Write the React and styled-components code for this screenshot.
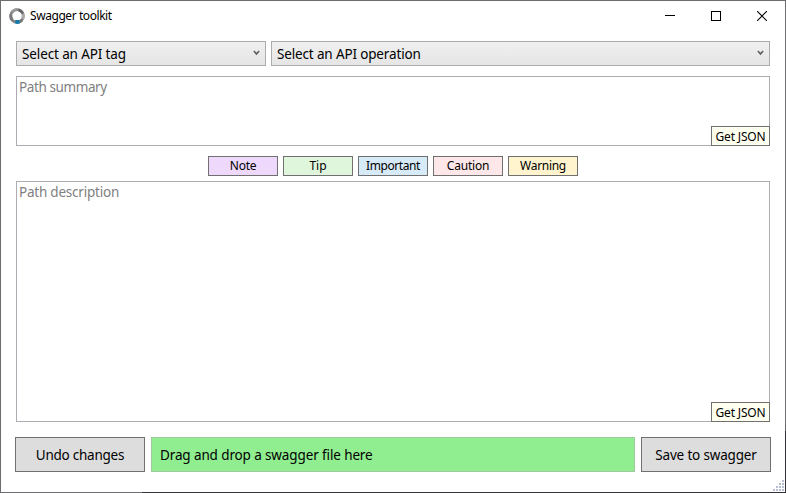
import React from "react";
import styled, { createGlobalStyle } from "styled-components";

const GlobalStyle = createGlobalStyle`
  *, *::before, *::after { box-sizing: border-box; }
  body { margin: 0; background: #fff; }
  button { border-radius: 0; margin: 0; padding: 0; }
`;

const Window = styled.main`
  position: relative;
  width: 786px;
  height: 493px;
  display: flex;
  flex-direction: column;
  border: 1px solid #6d6d6f;
  background: #fff;
  color: #000;
  font-family: "Noto Sans", "Open Sans", sans-serif;
`;

const BottomEdge = styled.div`
  position: absolute;
  left: 141px;
  right: -1px;
  bottom: -1px;
  height: 1px;
  background: #333338;
`;

const RightEdge = styled.div`
  position: absolute;
  right: -1px;
  bottom: -1px;
  width: 1px;
  height: 62px;
  background: #333338;
`;

const Text = styled.span`
  display: block;
  white-space: pre;
  font-size: ${(p) => p.$size}px;
  line-height: 18px;
  letter-spacing: ${(p) => p.$spacing || 0}px;
`;

const TitleBar = styled.header`
  height: 30px;
  display: flex;
  align-items: center;
  padding-left: 8px;
`;

const Title = styled(Text)`
  flex: 1;
  margin-left: 5px;
`;

const CaptionButton = styled.button`
  width: 46px;
  height: 29px;
  display: grid;
  place-items: center;
  border: 0;
  background: transparent;
`;

const CaptionButtons = styled.div`
  display: flex;
  height: 30px;
  align-items: flex-start;
`;

const Content = styled.div`
  display: flex;
  flex-direction: column;
  padding: 10px 15px 0;
`;

const SelectRow = styled.div`
  display: flex;
  gap: 5px;
`;

const Select = styled.button`
  width: ${(p) => p.$width}px;
  height: 25px;
  display: flex;
  align-items: center;
  justify-content: space-between;
  padding: 1px 5px 0;
  border: 1px solid #acacac;
  background: linear-gradient(#f0f0f0, #e5e5e5);
  color: #000;
  font-family: inherit;
  text-align: left;
`;

const Chevron = styled.svg`
  margin-top: -2px;
`;

const Editor = styled.section`
  position: relative;
  height: ${(p) => p.$height}px;
  margin-top: ${(p) => p.$top}px;
  padding: 1px 2px;
  border: 1px solid #abadb3;
  color: #808080;
`;

const JsonButton = styled.button`
  position: absolute;
  right: -1px;
  bottom: -1px;
  width: 59px;
  height: 20px;
  display: grid;
  place-items: center;
  padding-top: 1px;
  border: 1px solid #707070;
  background: #fffff0;
  font-family: inherit;
  color: #000;
`;

const TagRow = styled.div`
  display: flex;
  justify-content: center;
  gap: 5px;
  margin-top: 10px;
`;

const Tag = styled.button`
  width: 70px;
  height: 20px;
  display: grid;
  place-items: center;
  border: 1px solid #707070;
  background: ${(p) => p.$color};
  color: #000;
  font-family: inherit;
`;

const Footer = styled.footer`
  display: flex;
  gap: 6px;
  margin: 15px -1px 0;
`;

const ActionButton = styled.button`
  width: 130px;
  height: 35px;
  display: grid;
  place-items: center;
  padding-top: 1px;
  border: 1px solid #707070;
  background: #ddd;
  color: #000;
  font-family: inherit;
`;

const DropZone = styled.div`
  flex: 1;
  height: 35px;
  display: flex;
  align-items: center;
  padding: 1px 8px 0;
  border: 1px solid #9fcaa0;
  background: #90ee90;
`;

const Grip = styled.svg`
  position: absolute;
  right: 1px;
  bottom: 1px;
`;

const tags = [
  { label: "Note", color: "#eed9fc", spacing: -0.3 },
  { label: "Tip", color: "#dff6dd", spacing: 0 },
  { label: "Important", color: "#d7eaf8", spacing: -0.42 },
  { label: "Caution", color: "#fde7e9", spacing: -0.2 },
  { label: "Warning", color: "#fff4ce", spacing: -0.3 },
];

const gripDots = [[9, 0], [6, 3], [9, 3], [3, 6], [6, 6], [9, 6], [0, 9], [3, 9], [6, 9], [9, 9]];

function AppLogo() {
  return (
    <svg width="16" height="16" viewBox="0 0 16 16" fill="none" strokeWidth="2.8">
      <circle cx="8" cy="8" r="6.3" stroke="#858585" />
      <path d="M3.2 4A6.3 6.3 0 0 1 8 1.7" stroke="#999" />
      <path d="M9.5 1.9A6.3 6.3 0 0 1 13.7 5.2" stroke="#666" />
      <path d="M13.9 6A6.3 6.3 0 0 1 13.7 10.8" stroke="#aaa" />
      <path d="M1.9 6.7A6.3 6.3 0 0 0 3.4 12.2" stroke="#777" />
      <path d="M13 12A6.3 6.3 0 0 1 10.6 13.7" stroke="#777" />
      <path d="M6.3 12H10.4L10.8 15.4Q8 16.4 6.2 15.3Z" fill="#137cab" />
    </svg>
  );
}

function Dropdown({ width, label, spacing }) {
  return (
    <Select $width={width}>
      <Text $size={13.5} $spacing={spacing}>{label}</Text>
      <Chevron width="7" height="6" viewBox="0 0 7 6" fill="none" stroke="#606060" strokeWidth="1.7">
        <path d="M.9 1L3.5 4L6.1 1" />
      </Chevron>
    </Select>
  );
}

function TextEditor({ height, top, placeholder, spacing }) {
  return (
    <Editor $height={height} $top={top}>
      <Text $size={13.5} $spacing={spacing}>{placeholder}</Text>
      <JsonButton><Text $size={12} $spacing={-0.15}>Get JSON</Text></JsonButton>
    </Editor>
  );
}

export default function App() {
  return (
    <>
      <GlobalStyle />
      <Window>
        <TitleBar>
          <AppLogo />
          <Title $size={12} $spacing={-0.43}>Swagger toolkit</Title>
          <CaptionButtons>
            <CaptionButton aria-label="Minimize">
              <svg width="10" height="11" viewBox="0 0 10 11" shapeRendering="crispEdges"><path d="M0 5.5H10" stroke="#000" /></svg>
            </CaptionButton>
            <CaptionButton aria-label="Maximize">
              <svg width="10" height="10" viewBox="0 0 10 10" shapeRendering="crispEdges"><path d="M.5.5h9v9h-9Z" fill="none" stroke="#000" /></svg>
            </CaptionButton>
            <CaptionButton aria-label="Close">
              <svg width="10" height="10" viewBox="0 0 10 10"><path d="M0 0L10 10M10 0L0 10" stroke="#000" strokeWidth="1.1" /></svg>
            </CaptionButton>
          </CaptionButtons>
        </TitleBar>
        <Content>
          <SelectRow>
            <Dropdown width={250} label="Select an API tag" spacing={-0.12} />
            <Dropdown width={499} label="Select an API operation" spacing={-0.15} />
          </SelectRow>
          <TextEditor height={70} top={10} placeholder="Path summary" spacing={-0.4} />
          <TagRow>
            {tags.map((tag) => (
              <Tag key={tag.label} $color={tag.color}>
                <Text $size={12} $spacing={tag.spacing}>{tag.label}</Text>
              </Tag>
            ))}
          </TagRow>
          <TextEditor height={241} top={5} placeholder="Path description" spacing={-0.22} />
          <Footer>
            <ActionButton><Text $size={13.5} $spacing={-0.25}>Undo changes</Text></ActionButton>
            <DropZone><Text $size={13.5} $spacing={-0.12}>Drag and drop a swagger file here</Text></DropZone>
            <ActionButton><Text $size={13.5} $spacing={-0.17}>Save to swagger</Text></ActionButton>
          </Footer>
        </Content>
        <Grip width="11" height="11" viewBox="0 0 11 11" fill="#b8bfd3">
          {gripDots.map(([x, y]) => <rect key={`${x}-${y}`} x={x} y={y} width="2" height="2" />)}
        </Grip>
        <BottomEdge />
        <RightEdge />
      </Window>
    </>
  );
}
